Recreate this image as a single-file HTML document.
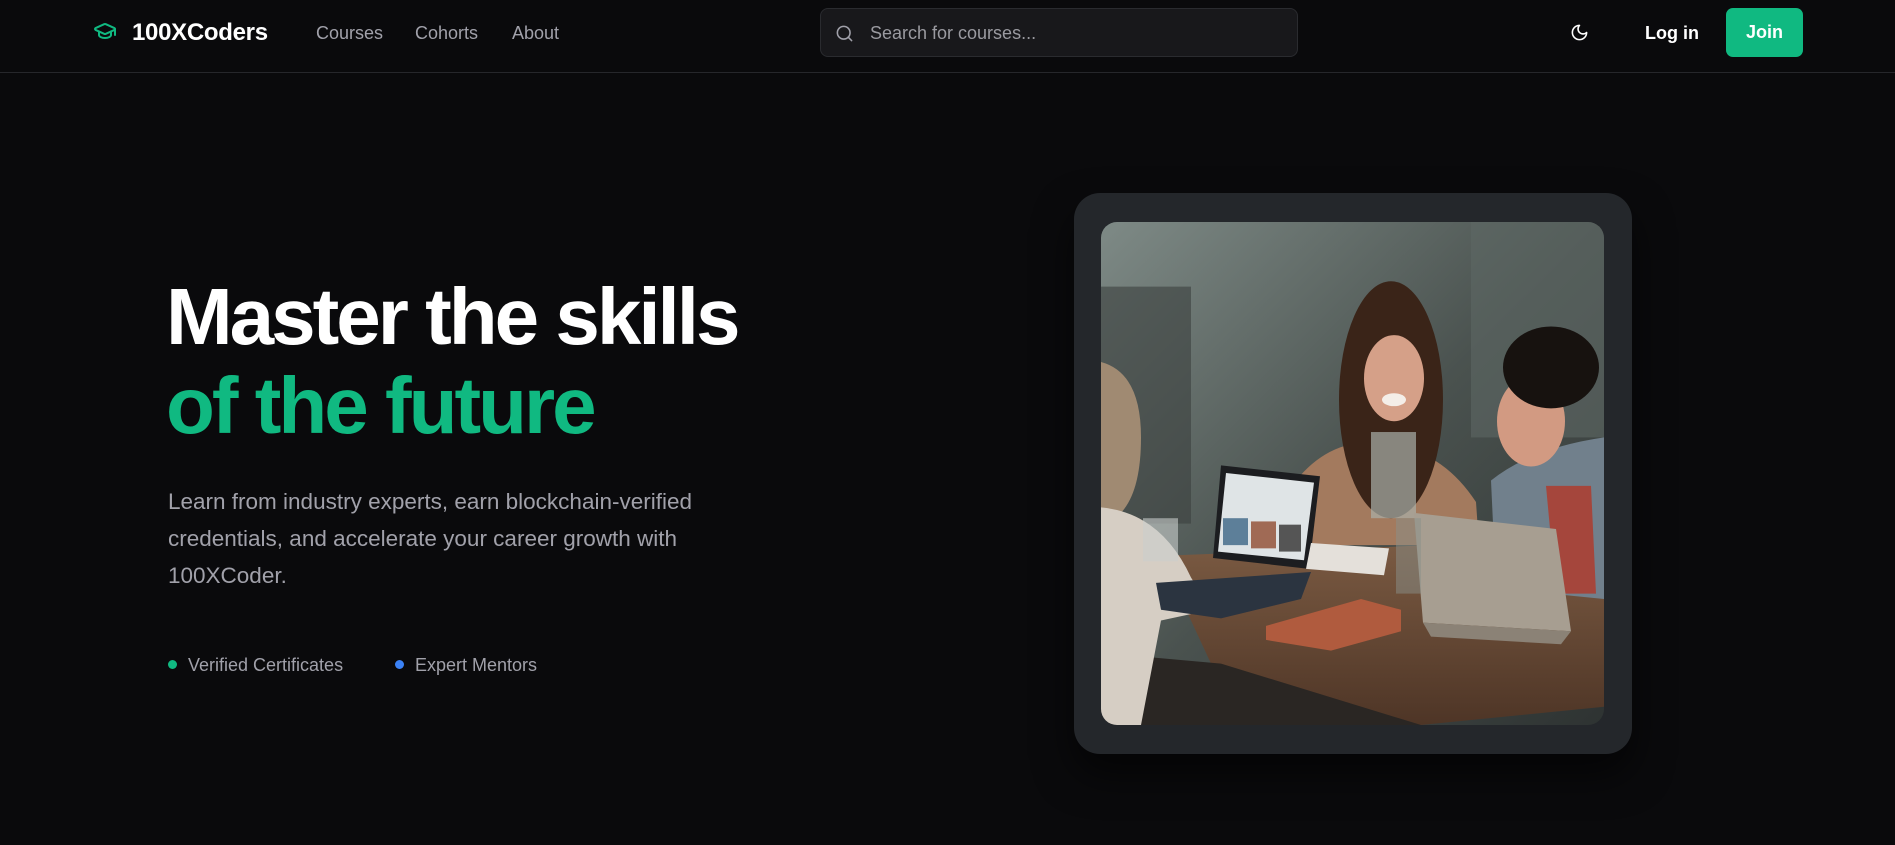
<!DOCTYPE html>
<html><head><meta charset="utf-8"><style>
*{margin:0;padding:0;box-sizing:border-box}
body{width:1895px;height:845px;background:#0a0a0c;font-family:"Liberation Sans",sans-serif;position:relative;overflow:hidden;color:#fff}
.nav{position:absolute;left:0;top:0;width:1895px;height:73px;border-bottom:1px solid #26272b}
.abs{position:absolute}
.logo{left:132px;top:19px;font-size:24px;font-weight:700;letter-spacing:-0.3px}
.link{top:23px;font-size:18px;color:#a1a1aa}
.search{left:820px;top:8px;width:478px;height:49px;border:1px solid #2a2b2f;background:#18181b;border-radius:8px}
.search span{position:absolute;left:49px;top:14px;font-size:18px;color:#9a9aa0}
.join{left:1726px;top:8px;width:77px;height:49px;background:#10b981;border-radius:7px;font-weight:700;font-size:18px;text-align:center;line-height:49px}
h1{position:absolute;left:166px;top:272px;font-size:80px;line-height:89px;font-weight:700;letter-spacing:-3px;white-space:nowrap}
h1 .g{color:#10b981}
.p{left:168px;top:483px;width:600px;font-size:22.5px;line-height:37px;color:#a1a1aa}
.b{top:655px;font-size:18px;color:#a1a1aa}
.dot{width:9px;height:9px;border-radius:50%;top:660px}
.card{left:1074px;top:193px;width:558px;height:561px;background:#24272b;border-radius:26px;box-shadow:0 20px 40px rgba(0,0,0,.6)}
.img{left:1101px;top:222px;width:503px;height:503px;border-radius:16px;overflow:hidden}
</style></head><body>
<div class="nav">
<svg class="abs" style="left:93px;top:19px" width="24" height="24" viewBox="0 0 24 24" fill="none" stroke="#10b981" stroke-width="2" stroke-linecap="round" stroke-linejoin="round"><path d="M21.42 10.922a1 1 0 0 0-.019-1.838L12.83 5.18a2 2 0 0 0-1.660 0L2.6 9.08a1 1 0 0 0 0 1.832l8.57 3.908a2 2 0 0 0 1.66 0z"/><path d="M22 10v6"/><path d="M6 12.5V16a6 3 0 0 0 12 0v-3.5"/></svg>
<div class="abs logo">100XCoders</div>
<div class="abs link" style="left:316px">Courses</div>
<div class="abs link" style="left:415px">Cohorts</div>
<div class="abs link" style="left:512px">About</div>
<div class="abs search"><svg class="abs" style="left:14px;top:15px" width="19" height="19" viewBox="0 0 24 24" fill="none" stroke="#a1a1aa" stroke-width="2" stroke-linecap="round"><circle cx="11" cy="11" r="8"/><path d="m21 21-4.3-4.3"/></svg><span>Search for courses...</span></div>
<svg class="abs" style="left:1570px;top:23px" width="19" height="19" viewBox="0 0 24 24" fill="none" stroke="#fff" stroke-width="2" stroke-linecap="round" stroke-linejoin="round"><path d="M12 3a6 6 0 0 0 9 9 9 9 0 1 1-9-9Z"/></svg>
<div class="abs" style="left:1645px;top:23px;font-size:18px;font-weight:700">Log in</div>
<div class="abs join">Join</div>
</div>
<h1>Master the skills<br><span class="g">of the future</span></h1>
<div class="abs p">Learn from industry experts, earn blockchain-verified credentials, and accelerate your career growth with 100XCoder.</div>
<div class="abs dot" style="left:168px;background:#10b981"></div>
<div class="abs b" style="left:188px">Verified Certificates</div>
<div class="abs dot" style="left:395px;background:#3b82f6"></div>
<div class="abs b" style="left:415px">Expert Mentors</div>
<div class="abs card"></div>
<div class="abs img">
<svg width="503" height="503" viewBox="0 0 503 467" preserveAspectRatio="none">
<defs>
<linearGradient id="wall" x1="0" y1="0" x2="1" y2="1"><stop offset="0" stop-color="#7e8a86"/><stop offset=".5" stop-color="#4a524f"/><stop offset="1" stop-color="#2e3332"/></linearGradient>
<linearGradient id="tab" x1="0" y1="0" x2="0" y2="1"><stop offset="0" stop-color="#7a5a42"/><stop offset="1" stop-color="#4e3526"/></linearGradient>
</defs>
<rect width="503" height="467" fill="url(#wall)"/>
<rect x="370" y="0" width="133" height="200" fill="#5d6764" opacity=".6"/>
<rect x="0" y="60" width="90" height="220" fill="#3a403d" opacity=".6"/>
<polygon points="60,310 330,300 503,345 503,450 320,467 110,410" fill="url(#tab)"/>
<polygon points="0,400 120,410 320,467 0,467" fill="#2a2623"/>
<path d="M195,240 Q230,200 280,205 Q340,210 375,260 L378,300 L200,300 Z" fill="#a37a5e"/>
<ellipse cx="290" cy="165" rx="52" ry="110" fill="#3a2418"/>
<ellipse cx="293" cy="145" rx="30" ry="40" fill="#d5a088"/>
<ellipse cx="293" cy="165" rx="12" ry="6" fill="#f4eee8"/>
<rect x="270" y="195" width="45" height="80" fill="#aab0aa" opacity=".7"/>
<path d="M390,240 Q430,210 503,200 L503,350 L395,340 Z" fill="#71808c"/>
<path d="M445,245 L490,245 L495,345 L455,345 Z" fill="#a5463c"/>
<ellipse cx="430" cy="185" rx="34" ry="42" fill="#d29a82"/>
<ellipse cx="450" cy="135" rx="48" ry="38" fill="#17120f"/>
<path d="M0,130 Q40,140 40,200 Q40,250 20,270 L0,270 Z" fill="#a08a72"/>
<path d="M0,265 Q60,270 90,330 L110,360 L60,370 L40,467 L0,467 Z" fill="#d6cec4"/>
<polygon points="120,226 219,236 208,322 112,312" fill="#1c1d20"/>
<polygon points="125,233 213,242 203,314 117,306" fill="#dfe4e6"/>
<rect x="122" y="275" width="25" height="25" fill="#5d7f99"/>
<rect x="150" y="278" width="25" height="25" fill="#a06a55"/>
<rect x="178" y="281" width="22" height="25" fill="#555"/>
<polygon points="55,335 210,325 200,350 120,368 60,360" fill="#2b3440"/>
<polygon points="210,298 288,303 283,328 205,322" fill="#e4e0da"/>
<polygon points="165,375 260,350 300,360 300,380 230,398 165,388" fill="#b05b3e"/>
<polygon points="313,270 455,285 470,380 322,372" fill="#a79e91"/>
<polygon points="322,372 470,380 460,392 330,385" fill="#8b8276"/>
<rect x="42" y="275" width="35" height="40" fill="#c9cfcd" opacity=".6"/>
<rect x="295" y="275" width="25" height="70" fill="#8a8f8a" opacity=".5"/>
</svg>
</div>
</body></html>
